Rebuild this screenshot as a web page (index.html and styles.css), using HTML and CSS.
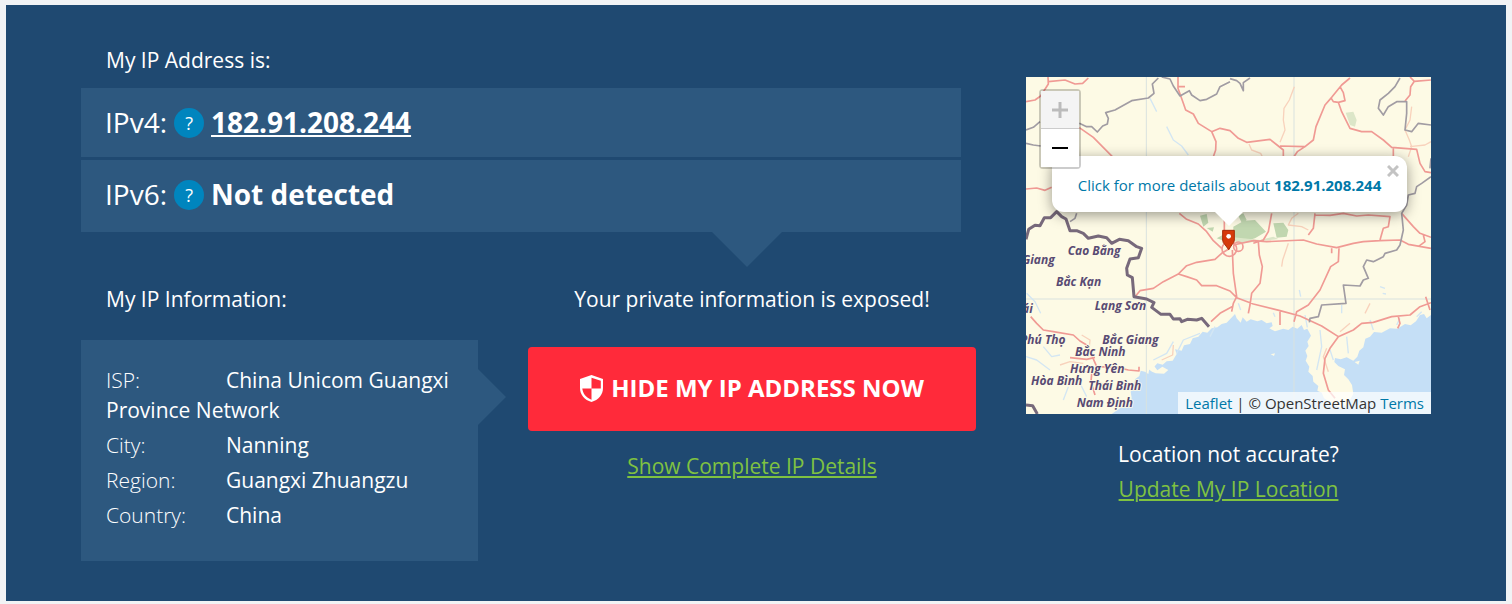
FILE: index.html
```html
<!DOCTYPE html>
<html lang="en">
<head>
<meta charset="utf-8">
<meta name="viewport" content="width=device-width, initial-scale=1">
<title>My IP Address</title>
<link rel="stylesheet" href="styles.css">
</head>
<body>
<main class="hero">
  <section class="details">
    <h2 class="heading">My IP Address is:</h2>
    <div class="addresses">
      <div class="address">
        <span class="address-label">IPv4:</span>
        <button class="help" type="button" aria-label="What is IPv4">?</button>
        <a class="address-value" href="#ipv4">182.91.208.244</a>
      </div>
      <div class="address">
        <span class="address-label">IPv6:</span>
        <button class="help" type="button" aria-label="What is IPv6">?</button>
        <span class="address-value">Not detected</span>
      </div>
    </div>
    <div class="lower">
      <div class="info">
        <h2 class="heading">My IP Information:</h2>
        <ul class="info-box">
          <li><span class="key">ISP:</span>China Unicom Guangxi Province Network</li>
          <li><span class="key">City:</span>Nanning</li>
          <li><span class="key">Region:</span>Guangxi Zhuangzu</li>
          <li><span class="key">Country:</span>China</li>
        </ul>
      </div>
      <div class="cta">
        <p class="exposed">Your private information is exposed!</p>
        <button class="hide-button" type="button">
          <svg class="shield" viewBox="0 0 23 27" aria-hidden="true"><path fill="#fff" fill-rule="evenodd" d="M11.500 0 23 4V13C23 19.500 18.500 25 11.500 27 4.500 25 0 19.500 0 13V4ZM11.500 2.700V13.500H20.800V5.800ZM11.500 13.500H2.300C2.800 18.500 6 22.500 11.500 24.700Z"/></svg>
          <span>HIDE MY IP ADDRESS NOW</span>
        </button>
        <a class="green-link" href="#details">Show Complete IP Details</a>
      </div>
    </div>
  </section>

  <aside class="location">
    <div class="map">
      <svg class="map-art" viewBox="18 21 1215 1011" preserveAspectRatio="xMidYMid slice" role="img" aria-label="Map of Nanning and the surrounding region">
        <rect class="land" x="18" y="21" width="1215" height="1011"/>
        <path class="water" d="M275 1032 300 1015 325 1002 335 985 332 965 342 950 345 928 358 918 362 902 375 905 385 912 388 896 400 893 412 880 428 884 440 874 458 872 470 852 465 838 485 842 492 826 510 822 518 805 535 800 548 785 562 788 575 775 592 772 605 762 620 758 630 748 645 732 650 745 662 758 668 742 680 755 692 748 712 754 725 750 740 760 755 757 758 768 748 775 765 784 790 776 805 780 818 770 832 776 845 765 852 780 862 776 873 797 862 815 866 828 856 842 862 858 857 872 868 890 865 905 878 918 880 935 895 948 892 962 905 968 912 985 935 1000 960 1015 985 998 1000 972 996 945 985 928 972 915 975 898 955 888 943 876 945 864 962 868 980 862 1000 872 1012 860 1018 842 1030 832 1036 806 1050 800 1062 786 1085 788 1110 775 1132 776 1155 762 1172 766 1188 754 1200 735 1212 732 1220 745 1233 735V1032Z"/>
        <path class="land" d="M380 893 398 882 412 901 427 890 445 900 432 911 407 910 396 905ZM470 820 485 808 480 826ZM752 853 765 850 762 858ZM1004 876 1019 872 1015 884Z"/>
        <path class="green" d="M540 437 560 432 565 458 550 470ZM560 474 582 472 578 485ZM655 437 670 430 680 450 665 458ZM640 470 672 452 705 450 738 485 705 505 670 515 640 507ZM760 460 790 458 805 480 800 500 770 503ZM590 505 608 495 625 502 612 512Z"/>
        <path class="green faint" d="M977 128 1000 125 1010 150 1005 170 990 165ZM640 502 720 510 760 500 775 507 650 522Z"/>
        <g class="grid">
          <path d="M379 21V1032M18 687H1233M822 21V1032"/>
        </g>
        <g class="stream">
          <path d="M390 85 410 125M440 170 460 210 485 228 505 255M20 670 45 695 62 730M70 830 95 860 120 855M130 990 145 950M300 835 280 860M460 815 440 850 400 870M540 790 490 810 470 850M585 770 570 800M655 700 662 720M760 728 765 740M838 660 842 680M965 705V730M1080 650 1095 655M1088 670 1098 672M855 735 862 772"/>
          <path d="M900 780 905 830 890 900M980 800 985 850M930 840 940 870M1050 750 1060 780M1130 765 1140 745M1190 740 1205 725M18 860 50 870 90 900M180 940 200 980"/>
        </g>
        <g class="road minor">
          <path d="M823 50 808 90 792 115 790 150 795 180 780 217M687 222 695 240 722 250 732 270M835 430 815 445 805 465 845 470 865 480M1175 110 1170 150 1155 180 1168 210 1175 230 1165 260M1170 230 1215 225 1233 215M805 520 788 570 785 590M1050 700 1035 730M960 785 990 760M920 835 910 860 925 905M460 825 458 855 425 870M185 795 210 810 205 860M120 885 150 875 190 880M160 900 240 910M230 930 270 960"/>
        </g>
        <g class="road">
          <path d="M18 95 45 90 62 78 85 42 84 21M85 35 135 30 165 42 188 40 205 24M178 173 220 202 277 260M18 357 50 354 75 361 95 352M474 21V55L490 100 497 120 520 132 535 160 575 185 588 215 587 240 580 260M472 50H495M575 185 600 175 630 182 655 205 680 217 750 208 775 228 790 240V270M780 228 855 230 880 210 888 170 915 105 935 82 965 45 990 24M855 230 832 245 815 270M932 82 940 95 955 97 975 92 970 68 960 50M955 97 965 125 990 175 1025 185 1055 185 1090 210 1115 232 1190 238 1200 280 1215 305 1233 308M1120 235V270M1155 93 1170 75 1172 50 1183 34 1233 30M1183 34 1170 21"/>
          <path d="M478 430 500 448 535 462 560 485 580 512 605 535M613 430V525M755 430 745 485 730 510 700 520M640 525 700 512 740 515 850 510 890 522 950 533 1000 520 1030 515 1080 512 1140 510 1165 523 1233 535M885 430 880 475 865 495M885 435 930 436 970 430 1010 438 1045 435 1110 440 1105 470 1090 475 1080 510M1145 430 1180 470 1200 490 1233 502M1195 530 1215 515 1210 495"/>
          <path d="M637 540 640 610 650 680 640 700 635 725M715 515 718 555 727 590 720 640 695 670 690 705 685 730M957 535 955 575 932 590 900 660 865 705 830 725 822 755M935 535V550M345 680 360 662 400 655 430 635 475 612 500 587 530 577 585 568 605 550 630 535M475 612 500 620 530 630 545 647 590 647 630 663 650 683 700 702 780 722 840 738 905 768 955 800 1000 780 1025 760 1060 757 1115 740 1170 735 1200 710 1233 698M780 725V765M955 800 930 835 915 865 910 910 925 960 945 985M1135 740 1140 760 1133 775M573 755 600 730 640 708M1217 680 1230 720M32 740 50 760 70 780 100 785 160 795 180 813 200 825 217 860 230 890 290 892 325 900 357 903V890M150 863 200 868 225 862M217 890 213 935 225 975"/>
          <circle cx="628" cy="537" r="22"/><circle cx="655" cy="530" r="14"/>
        </g>
        <g class="province">
          <path d="M178 160 200 170 215 170 232 186 248 168 262 162 265 145 257 128 285 120 335 92 385 84 402 70 397 42 415 24M425 21 450 27 460 48 480 78 508 62 515 75 540 92 560 88 590 72 600 50 630 35M630 26 650 32 660 40 670 62V38L690 24M18 180 40 172 60 155M18 220 40 225 62 228M170 430 165 445 150 455"/>
          <path d="M1140 24 1125 50 1105 70 1080 90 1075 115 1090 135 1105 110 1130 95 1160 95 1160 130 1155 180 1175 185 1195 160 1233 165M1233 320 1205 340 1190 350 1185 370 1165 375 1160 405 1145 430 1150 480 1140 525 1130 540 1095 550 1090 560 1060 575 1040 570 1030 590 1045 625 1030 630 1020 648 970 645 978 700 905 705 895 740 870 745 868 757M1233 265 1230 295"/>
        </g>
        <g class="border">
          <path d="M18 508 26 478 45 466 60 467 73 443 92 443 110 425 125 440 138 447 150 482 170 482 190 490 205 505 235 498 260 503 275 520 298 508 325 512 350 530 365 535 355 563 330 567 320 595 322 615 337 623 342 680 380 687 402 698 395 712 423 733 450 733 460 747 480 746 485 755 502 748 530 750 545 745 567 770M18 1005 38 1007 52 1032"/>
        </g>
        <g class="place">
          <text x="143" y="555">Cao Bằng</text>
          <text x="6" y="582">Giang</text>
          <text x="108" y="648">Bắc Kạn</text>
          <text x="224" y="719">Lạng Sơn</text>
          <text x="6" y="730">ái</text>
          <text x="0" y="821">Phú Thọ</text>
          <text x="247" y="821">Bắc Giang</text>
          <text x="165" y="857">Bắc Ninh</text>
          <text x="150" y="910">Hưng Yên</text>
          <text x="33" y="945">Hòa Bình</text>
          <text x="205" y="961">Thái Bình</text>
          <text x="170" y="1011">Nam Định</text>
        </g>
        <path class="pin" d="M608 481H643V510Q643 518 636 524L626 539 615 524Q608 518 608 510Z"/>
        <circle cx="626" cy="499" r="7" fill="#fff"/>
      </svg>
      <div class="popup">
        <a href="#more">Click for more details about <strong>182.91.208.244</strong></a>
        <button class="popup-close" type="button" aria-label="Close popup"><svg viewBox="0 0 12 12" aria-hidden="true"><path d="M1 1 11 11M11 1 1 11" stroke="#c3c3c3" stroke-width="3"/></svg></button>
      </div>
      <div class="zoom">
        <button type="button" disabled aria-label="Zoom in"><svg viewBox="0 0 16 16" aria-hidden="true"><path d="M0 8H16M8 0V16" stroke="#bbb" stroke-width="3"/></svg></button>
        <button type="button" aria-label="Zoom out"><svg viewBox="0 0 16 16" aria-hidden="true"><path d="M0 8H16" stroke="#000" stroke-width="2"/></svg></button>
      </div>
      <div class="attribution"><a href="#leaflet">Leaflet</a> | © OpenStreetMap <a href="#terms">Terms</a></div>
    </div>
    <p class="accuracy">Location not accurate?</p>
    <a class="green-link" href="#update">Update My IP Location</a>
  </aside>
</main>
</body>
</html>
```
FILE: styles.css
```css
* {
  box-sizing: border-box;
}

body {
  margin: 0;
  padding: 5px 6px 3px;
  background: #f1f3f5;
  color: #fff;
  font-family: "Open Sans", "Noto Sans", sans-serif;
  font-size: 21px;
  line-height: 30px;
}

button {
  padding: 0;
  border: 0;
  font-family: inherit;
  cursor: pointer;
}

svg {
  display: block;
}

.hero {
  display: grid;
  grid-template-columns: 895fr 405fr;
  gap: 50px;
  padding: 40px 75px;
  background: #1f4971;
}

.heading {
  margin: 0;
  padding-left: 25px;
  font-size: 21px;
  font-weight: 400;
}

.addresses {
  position: relative;
  display: grid;
  gap: 3px;
  margin: 13px 15px 0 0;
}

.addresses::after {
  content: "";
  position: absolute;
  top: 100%;
  right: 179px;
  border: 35px solid transparent;
  border-top-color: #2d587f;
  border-bottom: 0;
}

.address {
  display: flex;
  align-items: center;
  gap: 7px;
  padding: 15px 24px;
  background: #2d587f;
  font-size: 28px;
  line-height: 39px;
}

.address:last-child {
  padding-bottom: 18px;
}

.address-label {
  font-weight: 400;
}

.address-value {
  color: #fff;
  font-weight: 700;
}

.help {
  width: 30px;
  height: 30px;
  border-radius: 50%;
  background: #0085be;
  color: #fff;
  font-size: 18px;
  line-height: 30px;
}

.lower {
  display: grid;
  grid-template-columns: 397fr 448fr;
  gap: 50px;
  margin-top: 52px;
}

.info-box {
  position: relative;
  display: grid;
  gap: 5px;
  margin: 26px 0 0;
  padding: 25px 25px 31px;
  background: #2d587f;
  list-style: none;
}

.info-box::after {
  content: "";
  position: absolute;
  top: 29px;
  left: 100%;
  border: 28px solid transparent;
  border-left-color: #2d587f;
  border-right: 0;
}

.key {
  display: inline-block;
  width: 120px;
  font-weight: 300;
}

.cta {
  display: flex;
  flex-direction: column;
  align-items: center;
}

.exposed {
  margin: 0;
}

.hide-button {
  display: flex;
  align-items: center;
  justify-content: center;
  gap: 8px;
  width: 100%;
  margin: 33px 0 20px;
  padding: 26px 20px 28px;
  border-radius: 4px;
  background: #ff2a3a;
  color: #fff;
  font-size: 24px;
  font-weight: 700;
  line-height: 30px;
}

.shield {
  width: 23px;
  height: 27px;
}

.green-link {
  color: #7fc241;
}

.location {
  padding-top: 32px;
  text-align: center;
}

.map {
  position: relative;
  overflow: hidden;
  color: #333;
  font-size: 15px;
  line-height: 22px;
}

.map a {
  color: #0078a8;
  text-decoration: none;
}

.map-art {
  width: 100%;
  height: auto;
}

.land {
  fill: #fdfae5;
}

.water {
  fill: #c5dff6;
}

.green {
  fill: #c1d7b0;
}

.faint {
  fill: #dce6c8;
}

.grid,
.stream,
.road,
.province,
.border {
  fill: none;
  stroke-linejoin: round;
}

.grid {
  stroke: #d9e2df;
  stroke-width: 3;
}

.stream {
  stroke: #d3e6f3;
  stroke-width: 4;
}

.road {
  stroke: #f09a94;
  stroke-width: 5;
}

.minor {
  stroke: #f8d2bc;
  stroke-width: 4;
}

.province {
  stroke: #a19ca3;
  stroke-width: 5;
}

.border {
  stroke: #77697b;
  stroke-width: 9;
}

.place {
  fill: #584a73;
  stroke: #fdfae5;
  stroke-width: 5;
  paint-order: stroke;
  font-size: 36px;
  font-style: italic;
  font-weight: 700;
}

.pin {
  fill: #d63a0b;
  stroke: #a72b08;
  stroke-width: 3;
}

.popup {
  position: absolute;
  top: 79px;
  left: 26px;
  right: 24px;
  padding: 18px 20px 16px;
  border-radius: 12px;
  background: #fff;
  box-shadow: 0 3px 14px rgba(0, 0, 0, 0.4);
  white-space: nowrap;
}

.popup::after {
  content: "";
  position: absolute;
  top: 100%;
  left: calc(50% - 15px);
  border: 14px solid transparent;
  border-top-color: #fff;
  border-bottom: 0;
}

.popup-close {
  position: absolute;
  top: 9px;
  right: 8px;
  width: 12px;
  height: 12px;
  background: none;
}

.zoom {
  position: absolute;
  top: 12px;
  left: 13px;
  display: grid;
  border: 2px solid rgba(0, 0, 0, 0.2);
  border-radius: 4px;
  background-clip: padding-box;
}

.zoom button {
  display: grid;
  place-items: center;
  width: 38px;
  height: 38px;
  background: #fff;
}

.zoom button:disabled {
  height: 37px;
  box-sizing: content-box;
  border-bottom: 1px solid #ccc;
  background: #f4f4f4;
}

.zoom svg {
  width: 16px;
  height: 16px;
}

.attribution {
  position: absolute;
  right: 0;
  bottom: 0;
  padding: 0 7px;
  background: rgba(255, 255, 255, 0.7);
  white-space: nowrap;
}

.accuracy {
  margin: 25px 0 5px;
}
```
